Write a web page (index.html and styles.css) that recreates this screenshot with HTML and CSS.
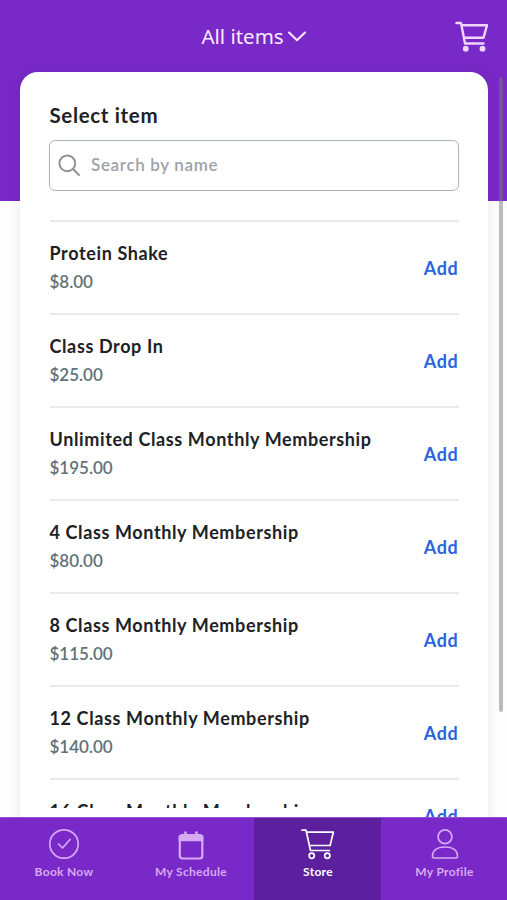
FILE: index.html
```html
<!DOCTYPE html>
<html lang="en">
<head>
<meta charset="utf-8">
<title>Store</title>
<link rel="stylesheet" href="styles.css">
</head>
<body>
<div class="app">
  <main class="content">
    <header class="topbar">
      <span></span>
      <button class="filter"><span>All items</span>
        <svg width="18" height="11" viewBox="0 0 18 11"><path d="M1 1.500 9 9.200 17 1.500"/></svg>
      </button>
      <svg class="cart" width="34" height="31" viewBox="0 0 34 31"><path d="M1.500 2h4.500l4 20.500h18.500M6.500 4.200H32l-3.500 12.500H9"/><circle cx="10.800" cy="27.700" r="2.900"/><circle cx="27.500" cy="27.700" r="2.900"/></svg>
    </header>
    <section class="card">
      <h1 class="title">Select item</h1>
      <label class="search">
        <svg width="23" height="23" viewBox="0 0 23 23"><circle cx="9.300" cy="9.300" r="7.900"/><path d="m15 15 6 6"/></svg>
        <span>Search by name</span>
      </label>
      <ul class="items">
        <li class="item"><div><h2 class="name">Protein Shake</h2><p class="price">$8.00</p></div><a class="add">Add</a></li>
        <li class="item"><div><h2 class="name">Class Drop In</h2><p class="price">$25.00</p></div><a class="add">Add</a></li>
        <li class="item"><div><h2 class="name">Unlimited Class Monthly Membership</h2><p class="price">$195.00</p></div><a class="add">Add</a></li>
        <li class="item"><div><h2 class="name">4 Class Monthly Membership</h2><p class="price">$80.00</p></div><a class="add">Add</a></li>
        <li class="item"><div><h2 class="name">8 Class Monthly Membership</h2><p class="price">$115.00</p></div><a class="add">Add</a></li>
        <li class="item"><div><h2 class="name">12 Class Monthly Membership</h2><p class="price">$140.00</p></div><a class="add">Add</a></li>
        <li class="item entering"><div><h2 class="name">16 Class Monthly Membership</h2></div><a class="add">Add</a></li>
      </ul>
    </section>
    <div class="scrollbar"></div>
  </main>
  <nav class="tabs">
    <a class="tab"><svg width="34" height="32" viewBox="0 0 34 32"><circle cx="17" cy="16" r="14.200"/><path d="m11.500 16 4 4 7.500-8.500"/></svg><span>Book Now</span></a>
    <a class="tab"><svg width="34" height="32" viewBox="0 0 34 32"><rect class="frame" x="5.800" y="7" width="22.500" height="23.500" rx="2.500"/><path class="thick" d="M11.500 4.500v4M22.500 4.500v4"/><path class="solid" d="M5.500 8h23v4.500h-23z"/></svg><span>My Schedule</span></a>
    <a class="tab active"><svg width="34" height="32" viewBox="0 0 34 32"><path d="M1 2.200h4l4.500 20.300h19M5.800 4.200h26.500l-3.200 13.300H8.700"/><circle cx="10.700" cy="27.800" r="2.600"/><circle cx="26.300" cy="27.800" r="2.600"/></svg><span>Store</span></a>
    <a class="tab"><svg width="34" height="32" viewBox="0 0 34 32"><circle cx="17" cy="8.700" r="6.900"/><path d="M4.500 28.500C4.500 22 10 19 17 19s12.500 3 12.500 9.500c0 1-.5 1.500-1.500 1.500H6c-1 0-1.500-.5-1.500-1.500z"/></svg><span>My Profile</span></a>
  </nav>
</div>
</body>
</html>
```

FILE: styles.css
```css
* { box-sizing: border-box; margin: 0; padding: 0; }
body { font-family: Lato, "Open Sans", sans-serif; background: #fefefe; color: #202124; }
svg { display: block; fill: none; stroke: currentColor; stroke-width: 2; stroke-linecap: round; stroke-linejoin: round; }
.app { width: 507px; height: 900px; display: grid; grid-template-rows: 817px 83px; overflow: hidden; }
.content { position: relative; overflow: hidden; background: linear-gradient(#7929c7 201px, #fefefe 201px); }
.topbar { height: 72px; padding: 1px 18px 0 18px; display: grid; grid-template-columns: 1fr auto 1fr; align-items: center; }
.filter { display: flex; align-items: center; gap: 4px; border: 0; background: none; color: #fbeaff; font: 400 20.500px/30px "Noto Sans", sans-serif; }
.filter span { margin-top: -1px; }
.cart { justify-self: end; color: #f1d5ff; stroke-width: 2.4; margin-top: -1px; }
.cart circle { fill: currentColor; stroke: none; }
.card { width: 468px; height: 800px; margin-left: 20px; padding: 29px 29.5px; background: #fff; border-radius: 18px; box-shadow: 0 0 14px rgba(20, 10, 50, .09); }
.title { font-size: 20.500px; line-height: 28px; font-weight: 700; letter-spacing: .65px; }
.search { display: flex; align-items: center; gap: 10px; height: 51px; margin-top: 11px; margin-left: -.5px; padding-left: 8px; border: 1.5px solid #aeb3b4; border-radius: 6px; color: #8e9297; font-size: 17px; font-weight: 600; letter-spacing: .65px; }
.search span { color: #9da3a8; padding-bottom: 2px; }
.items { list-style: none; margin-top: 29px; }
.item { height: 93px; border-top: 2px solid #e9eaea; display: flex; justify-content: space-between; padding-top: 17px; }
.name { font-size: 18px; line-height: 28px; font-weight: 700; letter-spacing: .62px; white-space: nowrap; }
.price { font-size: 17px; line-height: 28px; font-weight: 600; color: #617278; margin-top: 1px; }
.add { color: #2b64df; font-size: 18px; line-height: 28px; font-weight: 700; letter-spacing: .7px; margin: 15px 0 0; }
.entering .name { height: 11px; overflow: hidden; }
.entering .add { margin-top: 5px; }
.scrollbar { position: absolute; top: 77px; left: 499px; width: 4px; height: 635px; border-radius: 2px; background: rgba(120, 120, 120, .5); }
.tabs { display: grid; grid-template-columns: 127px 127px 127px 126px; background: #7929c7; border-top: 1px solid #9450d3; }
.tab { display: flex; flex-direction: column; align-items: center; padding: 10px 0 0 1px; color: #d7aaf5; font-size: 12px; font-weight: 700; line-height: 18px; gap: 3px; letter-spacing: .3px; }
.tab svg { stroke-width: 1.700; }
.tab .thick { stroke-width: 2.600; }
.tab .frame { stroke-width: 2.200; }
.solid { fill: currentColor; }
.active { background: #5c209f; color: #fff; }
```
